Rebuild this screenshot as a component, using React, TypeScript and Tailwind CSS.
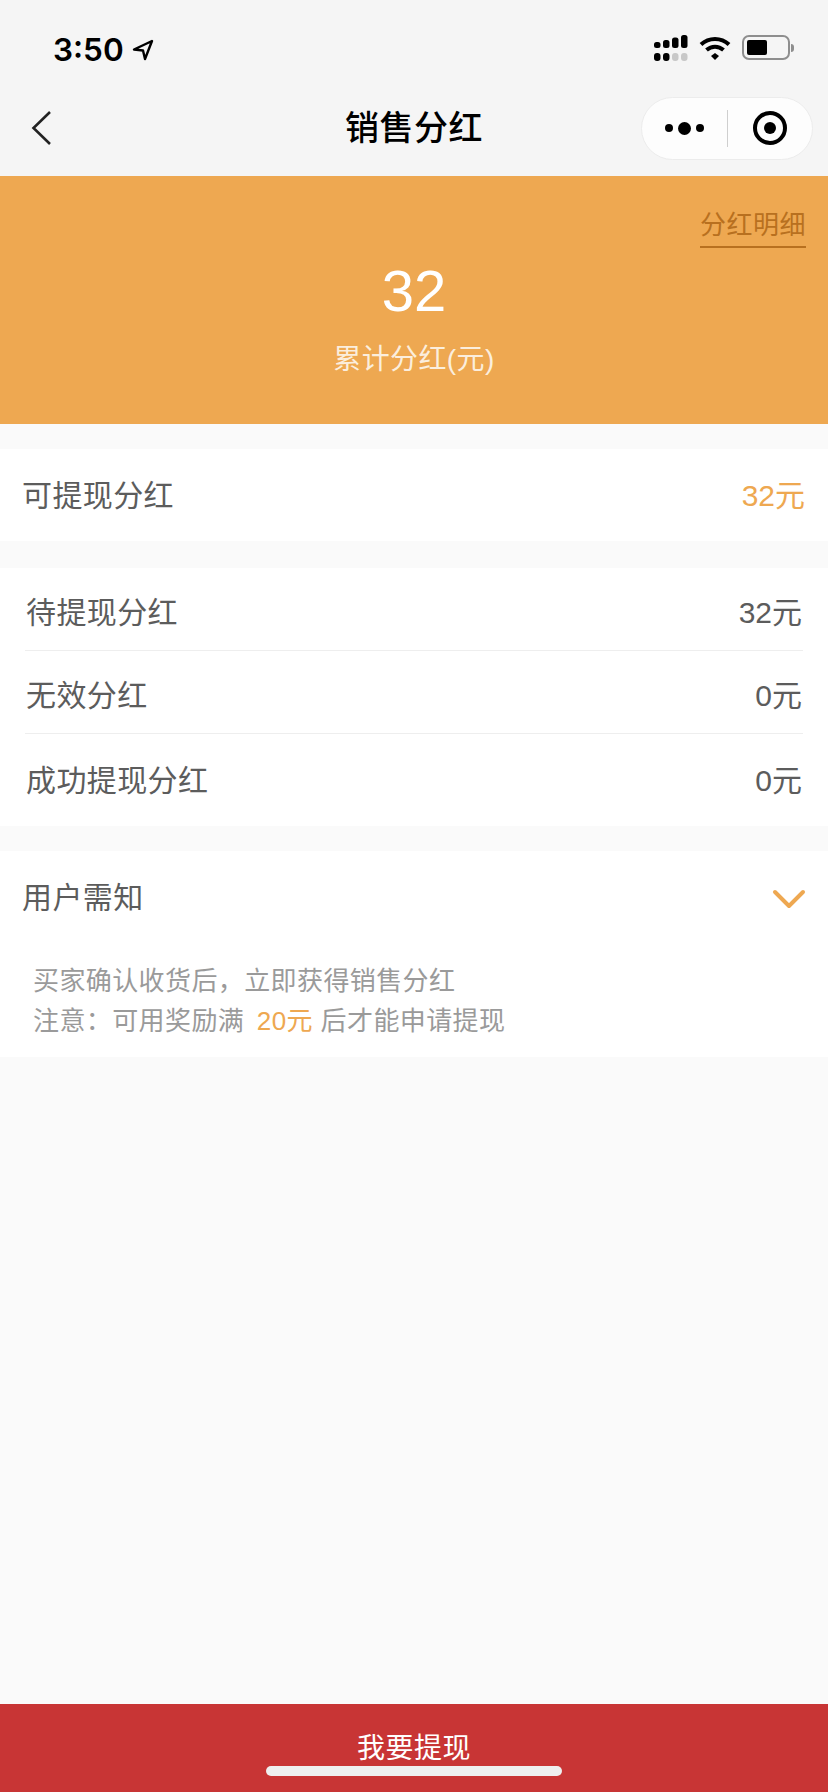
const sans = '"Liberation Sans", "Noto Sans CJK SC", sans-serif';

function StatusBar() {
  return (
    <div className="flex h-[84px] items-center justify-between pl-[53px] pr-[34px] pt-[16px]">
      <div className="flex items-center gap-[8px]">
        <span className="text-[31.500px] leading-[40px] font-semibold text-black" style={{ fontFamily: 'Inter, sans-serif' }}>3:50</span>
        <svg width="22" height="22" viewBox="0 0 22 22" fill="none" stroke="#000" strokeWidth="2.4" strokeLinejoin="round">
          <path d="M20 2 2 10.500l9 1 2 8.500z" />
        </svg>
      </div>
      <div className="-mt-[5px] flex items-center gap-[11px]">
        <svg width="34" height="26" viewBox="0 0 34 26" fill="#000">
          <rect x="0" y="7" width="6.500" height="6" rx="2.500" />
          <rect x="9" y="5" width="6.500" height="8" rx="2.500" />
          <rect x="18" y="2.500" width="6.500" height="10.500" rx="2.500" />
          <rect x="27" y="0" width="6.500" height="13" rx="2.500" />
          <rect x="0" y="18" width="6.500" height="8" rx="3" />
          <rect x="9" y="18" width="6.500" height="8" rx="3" />
          <rect x="18" y="18" width="6.500" height="8" rx="3" fill="#c8c8c8" />
          <rect x="27" y="18" width="6.500" height="8" rx="3" fill="#c8c8c8" />
        </svg>
        <svg width="32" height="24" viewBox="0 0 32 24" fill="none" stroke="#000" strokeWidth="4">
          <path d="M2 8.500c8-7.500 20-7.500 28 0" />
          <path d="M7.500 14c5-4.500 12-4.500 17 0" />
          <path d="M12 20l4-3 4 3-4 4z" fill="#000" stroke="none" />
        </svg>
        <div className="flex items-center gap-[1px]">
          <div className="flex h-[25px] w-[48px] items-center rounded-[7px] border-[2px] border-[#8e8e8e] p-[3px]">
            <div className="h-full w-[20px] rounded-[2px] bg-black" />
          </div>
          <div className="h-[8px] w-[3px] rounded-r-full bg-[#8e8e8e]" />
        </div>
      </div>
    </div>
  );
}

function NavBar() {
  return (
    <div className="relative flex h-[92px] items-center justify-between pb-[4px] pl-[30px] pr-[15px]">
      <svg width="24" height="36" viewBox="0 0 24 36" fill="none" stroke="#222" strokeWidth="2.6">
        <path d="M20 2 3.500 18 20 34" />
      </svg>
      <h1 className="absolute left-0 right-0 text-center text-[34px] leading-[48px] font-medium tracking-[0.5px] text-black">销售分红</h1>
      <div className="flex h-[63px] w-[172px] items-center rounded-full border border-[#ececec] bg-[#fdfdfd]">
        <div className="flex w-[85px] items-center justify-center gap-[5px]">
          <span className="h-[8px] w-[8px] rounded-full bg-black" />
          <span className="h-[13px] w-[13px] rounded-full bg-black" />
          <span className="h-[8px] w-[8px] rounded-full bg-black" />
        </div>
        <div className="h-[37px] w-px bg-[#cfcfcf]" />
        <div className="flex flex-1 items-center justify-center">
          <div className="flex h-[34px] w-[34px] items-center justify-center rounded-full border-[4px] border-black">
            <span className="h-[12px] w-[12px] rounded-full bg-black" />
          </div>
        </div>
      </div>
    </div>
  );
}

function Hero() {
  return (
    <div className="flex h-[248px] flex-col bg-[#eea851] pr-[22px]">
      <div className="flex justify-end pt-[31px]">
        <span className="border-b-2 border-[#b8701f] pb-[3px] text-[26px] leading-[36px] tracking-[0.5px] text-[#b8701f]">分红明细</span>
      </div>
      <div className="-mr-[22px] mt-[5px] text-center text-[58px] leading-[76px] text-white">32</div>
      <div className="-mr-[22px] mt-[11px] text-center text-[28px] leading-[40px] tracking-[0.4px] text-[#fbeedd]">累计分红(元)</div>
    </div>
  );
}

const rows = [
  { label: '待提现分红', value: '32元' },
  { label: '无效分红', value: '0元' },
  { label: '成功提现分红', value: '0元' },
];

export default function App() {
  return (
    <div className="relative flex h-[1792px] w-[828px] flex-col overflow-hidden bg-[#fafafa]" style={{ fontFamily: sans }}>
      <div className="bg-[#f5f5f5]">
        <StatusBar />
        <NavBar />
      </div>
      <Hero />

      <div className="mt-[25px] flex h-[92px] items-center justify-between bg-white pl-[22px] pr-[23px]">
        <span className="text-[30px] tracking-[0.4px] text-[#5c5c5c]">可提现分红</span>
        <span className="text-[30px] text-[#eea851]">32元</span>
      </div>

      <div className="mt-[27px] bg-white px-[25px]">
        {rows.map((row, i) => (
          <div key={row.label} className={`flex items-center justify-between px-px ${i < rows.length - 1 ? 'h-[83px] border-b border-[#eeeeee] pt-[7px]' : 'h-[92px]'}`}>
            <span className="text-[30px] tracking-[0.4px] text-[#5c5c5c]">{row.label}</span>
            <span className="text-[30px] text-[#5c5c5c]">{row.value}</span>
          </div>
        ))}
      </div>

      <div className="mt-[25px] h-[206px] bg-white">
        <div className="flex items-center justify-between px-[22px] pt-[25px]">
          <span className="text-[30px] leading-[44px] tracking-[0.4px] text-[#5c5c5c]">用户需知</span>
          <svg className="mt-[2px]" width="34" height="20" viewBox="0 0 34 20" fill="none" stroke="#eea851" strokeWidth="4" strokeLinecap="round" strokeLinejoin="round">
            <path d="M3 3l14 14L31 3" />
          </svg>
        </div>
        <div className="mt-[41px] pl-[33px] text-[26px] leading-[40px] tracking-[0.4px] text-[#9a9a9a]">
          <p>买家确认收货后，立即获得销售分红</p>
          <p>
            注意：可用奖励满 <span className="ml-[5px] text-[#eea851]">20元</span> 后才能申请提现
          </p>
        </div>
      </div>

      <div className="mt-auto flex h-[88px] justify-center bg-[#c83535] pt-[23px]">
        <span className="text-[28px] leading-[44px] tracking-[0.5px] text-white">我要提现</span>
      </div>
      <div className="absolute bottom-[16px] left-[266px] h-[10px] w-[296px] rounded-full bg-[#efefef]" />
    </div>
  );
}
